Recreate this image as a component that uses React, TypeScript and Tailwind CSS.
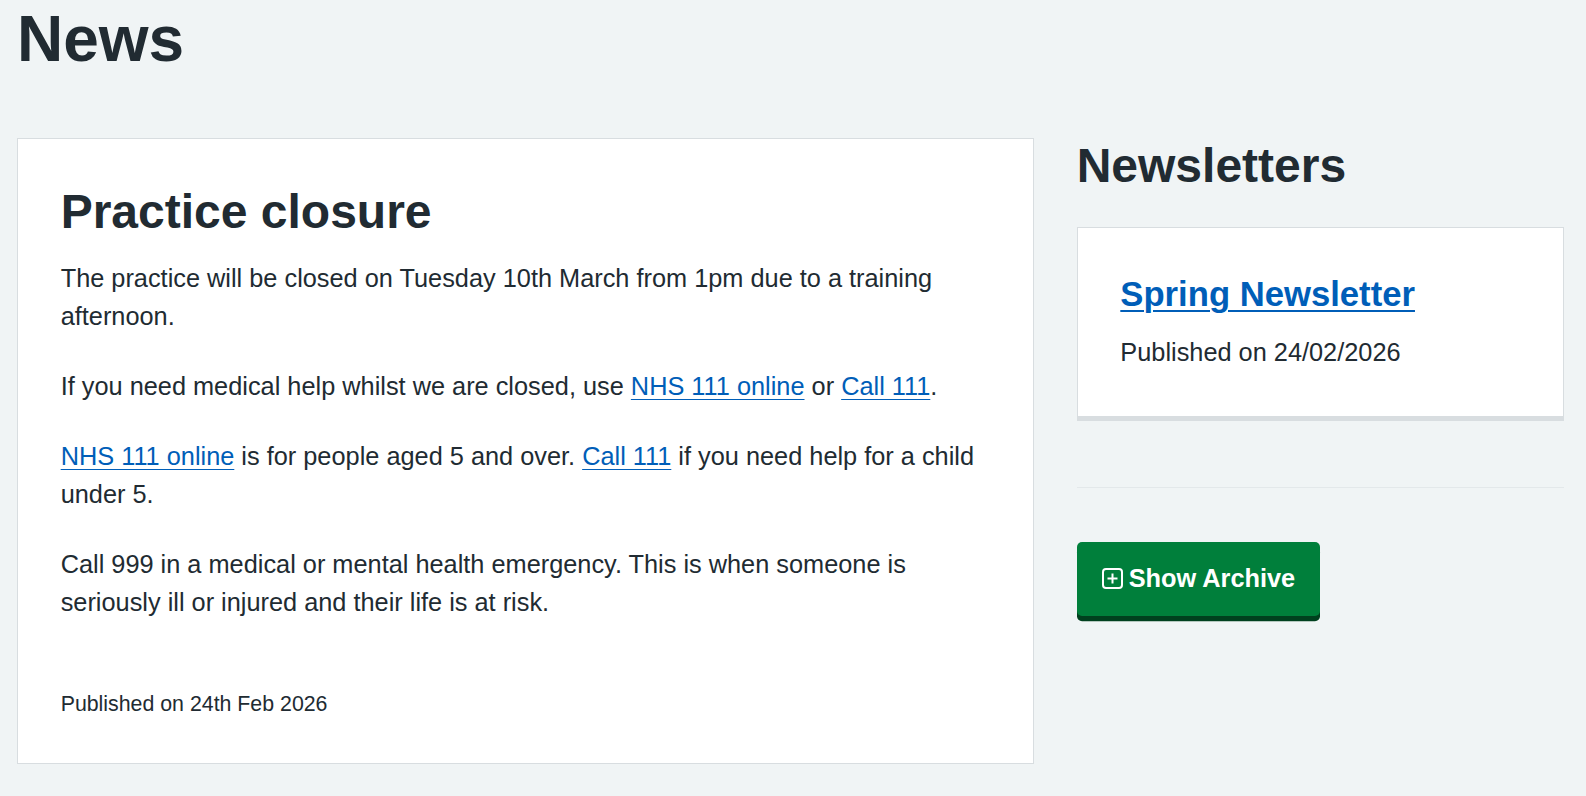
import React from "react";

const linkClass =
  "text-[#005eb8] underline decoration-[1.33px] underline-offset-[4px] hover:text-[#7c2855]";

function PlusSquareIcon() {
  return (
    <svg width="21" height="21" viewBox="0 0 21 21" fill="none" aria-hidden="true">
      <rect x="1" y="1" width="19" height="19" rx="3" stroke="white" strokeWidth="2" />
      <path d="M10.5 5.5v10M5.5 10.5h10" stroke="white" strokeWidth="2" />
    </svg>
  );
}

function NewsCard() {
  return (
    <div className="w-[1017px] shrink-0 bg-white border border-[#d8dde0] px-[42.67px] pt-[45.7px] pb-[43px]">
      <h2 className="text-[48px] leading-[56px] font-bold mb-[19px]">Practice closure</h2>
      <p className="text-[25.33px] leading-[38px] mb-[32px]">
        The practice will be closed on Tuesday 10th March from 1pm due to a training afternoon.
      </p>
      <p className="text-[25.33px] leading-[38px] mb-[32px]">
        If you need medical help whilst we are closed, use{" "}
        <a href="#" className={linkClass}>
          NHS 111 online
        </a>{" "}
        or{" "}
        <a href="#" className={linkClass}>
          Call 111
        </a>
        .
      </p>
      <p className="text-[25.33px] leading-[38px] mb-[32px]">
        <a href="#" className={linkClass}>
          NHS 111 online
        </a>{" "}
        is for people aged 5 and over.{" "}
        <a href="#" className={linkClass}>
          Call 111
        </a>{" "}
        if you need help for a child under 5.
      </p>
      <p className="text-[25.33px] leading-[38px]">
        Call 999 in a medical or mental health emergency. This is when someone is seriously ill or
        injured and their life is at risk.
      </p>
      <p className="text-[21.33px] leading-[32px] mt-[67px]">Published on 24th Feb 2026</p>
    </div>
  );
}

function Newsletters() {
  return (
    <div className="w-[487px] shrink-0">
      <h2 className="text-[48px] leading-[56px] font-bold mb-[33.5px]">Newsletters</h2>
      <div className="bg-white border border-[#d8dde0] shadow-[0_4px_0_0_#d8dde0] px-[42.67px] pt-[45px] pb-[45px]">
        <a
          href="#"
          className="block w-fit text-[34.67px] leading-[42.67px] font-bold text-[#005eb8] underline decoration-[2px] underline-offset-[4px] mb-[18px]"
        >
          Spring Newsletter
        </a>
        <p className="text-[25.33px] leading-[37.33px]">Published on 24/02/2026</p>
      </div>
      <hr className="mt-[70px] border-0 border-t border-[#e3e8ea]" />
      <button
        type="button"
        className="mt-[53.4px] h-[74px] inline-flex items-center gap-[6px] px-[25px] rounded-[5px] bg-[#007f3b] text-white text-[25.33px] leading-none font-bold shadow-[0_5.33px_0_0_#00401e]"
      >
        <PlusSquareIcon />
        Show Archive
      </button>
    </div>
  );
}

export default function App() {
  return (
    <div className="min-h-screen bg-[#f0f4f5] text-[#212b32] font-['Liberation_Sans',Arial,sans-serif]">
      <div className="pl-[17px] pt-[2px]">
        <h1 className="text-[64px] leading-[74.67px] font-bold mb-[61px]">News</h1>
        <div className="flex items-start gap-[42.67px]">
          <NewsCard />
          <Newsletters />
        </div>
      </div>
    </div>
  );
}
